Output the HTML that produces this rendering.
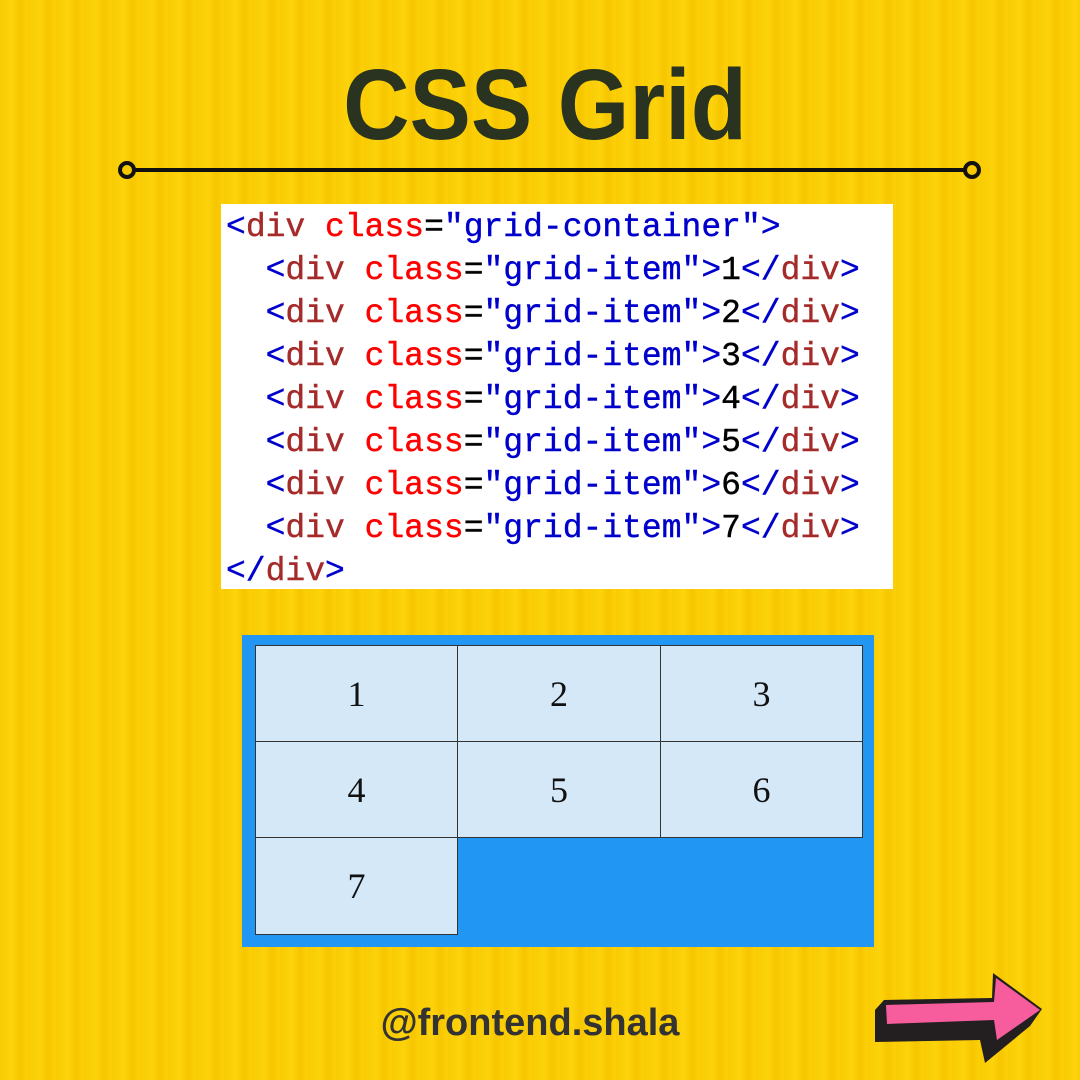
<!DOCTYPE html>
<html><head><style>
body{margin:0;width:1080px;height:1080px;overflow:hidden;position:relative;font-family:"Liberation Sans",sans-serif;
background:repeating-linear-gradient(90deg,#f9cb02 0px,#fdd30c 12px,#f6c600 20px,#fcd007 28px);}
.title{position:absolute;top:48px;left:0;width:1090px;text-align:center;font-weight:bold;font-size:100px;color:#29331f;transform:scaleX(0.92);transform-origin:545px 0}
.code{position:absolute;left:221px;top:204px;width:672px;height:385px;background:#fff;font-family:"Liberation Mono",monospace;font-size:33px;line-height:43px;padding-top:2px;box-sizing:border-box;white-space:pre;padding-left:5px;-webkit-text-stroke:0.4px}
.b{color:#0000cd}.t{color:#a52a2a}.r{color:#ff0000}.k{color:#000}
.grid{position:absolute;left:242px;top:635px;width:632px;height:312px;background:#2196f3}
.c{position:absolute;background:#d4e8f8;border:1px solid #333;box-sizing:border-box;font-family:"Liberation Serif",serif;font-size:36px;display:flex;align-items:center;justify-content:center;color:#111}
.foot{position:absolute;top:1002px;left:0;width:1060px;text-align:center;font-weight:bold;font-size:38px;color:#333}
</style></head><body>
<div class="title">CSS Grid</div>
<svg style="position:absolute;left:0;top:0" width="1080" height="200"><line x1="127" y1="170" x2="972" y2="170" stroke="#111" stroke-width="4"/><circle cx="127" cy="170" r="7" fill="#f7c800" stroke="#111" stroke-width="4"/><circle cx="972" cy="170" r="7" fill="#f7c800" stroke="#111" stroke-width="4"/></svg>
<div class="code"><span class="b">&lt;</span><span class="t">div</span> <span class="r">class</span><span class="k">=</span><span class="b">"grid-container"&gt;</span>
  <span class="b">&lt;</span><span class="t">div</span> <span class="r">class</span><span class="k">=</span><span class="b">"grid-item"&gt;</span><span class="k">1</span><span class="b">&lt;/</span><span class="t">div</span><span class="b">&gt;</span>
  <span class="b">&lt;</span><span class="t">div</span> <span class="r">class</span><span class="k">=</span><span class="b">"grid-item"&gt;</span><span class="k">2</span><span class="b">&lt;/</span><span class="t">div</span><span class="b">&gt;</span>
  <span class="b">&lt;</span><span class="t">div</span> <span class="r">class</span><span class="k">=</span><span class="b">"grid-item"&gt;</span><span class="k">3</span><span class="b">&lt;/</span><span class="t">div</span><span class="b">&gt;</span>
  <span class="b">&lt;</span><span class="t">div</span> <span class="r">class</span><span class="k">=</span><span class="b">"grid-item"&gt;</span><span class="k">4</span><span class="b">&lt;/</span><span class="t">div</span><span class="b">&gt;</span>
  <span class="b">&lt;</span><span class="t">div</span> <span class="r">class</span><span class="k">=</span><span class="b">"grid-item"&gt;</span><span class="k">5</span><span class="b">&lt;/</span><span class="t">div</span><span class="b">&gt;</span>
  <span class="b">&lt;</span><span class="t">div</span> <span class="r">class</span><span class="k">=</span><span class="b">"grid-item"&gt;</span><span class="k">6</span><span class="b">&lt;/</span><span class="t">div</span><span class="b">&gt;</span>
  <span class="b">&lt;</span><span class="t">div</span> <span class="r">class</span><span class="k">=</span><span class="b">"grid-item"&gt;</span><span class="k">7</span><span class="b">&lt;/</span><span class="t">div</span><span class="b">&gt;</span>
<span class="b">&lt;/</span><span class="t">div</span><span class="b">&gt;</span></div>
<div class="grid">
<div class="c" style="left:13px;top:10px;width:203px;height:97px">1</div>
<div class="c" style="left:215px;top:10px;width:204px;height:97px">2</div>
<div class="c" style="left:418px;top:10px;width:203px;height:97px">3</div>
<div class="c" style="left:13px;top:106px;width:203px;height:97px">4</div>
<div class="c" style="left:215px;top:106px;width:204px;height:97px">5</div>
<div class="c" style="left:418px;top:106px;width:203px;height:97px">6</div>
<div class="c" style="left:13px;top:202px;width:203px;height:98px">7</div>
</div>
<div class="foot">@frontend.shala</div>
<svg style="position:absolute;left:860px;top:960px" width="200" height="110">
<polygon points="15,50 24,40 132,38 133,13 182,49 170,66 125,103 120,80 15,82" fill="#231f20"/>
<polygon points="26,45 134,42 136,18 180,50 137,80 134,60 27,64" fill="#f75d9c"/>
</svg>
</body></html>
